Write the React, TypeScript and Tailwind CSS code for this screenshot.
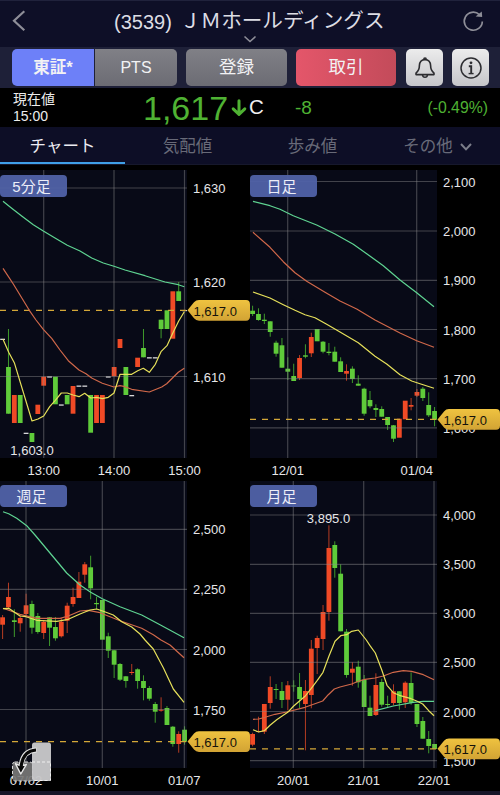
import type { ReactNode } from 'react'

type Side = 'up' | 'down' | 'flat'
// [slot, side, body top, body bottom, high, low]
type Candle = [number, Side, number, number, number?, number?]

interface ChartData {
  id: string
  label: string
  top: number
  height: number
  plotBottom: number
  hGrid: [number, string][]
  vGrid: [number, string][]
  price: number
  candles: Candle[]
  green: string
  orange: string
  yellow: string
  note?: { x: number; y: number; text: string }
}

const SLOT = 5.87
const FILL: Record<Side, string> = { up: '#f04a26', down: '#5fcb3a', flat: '#d8d8da' }
const WICK: Record<Side, string> = { up: '#b53c22', down: '#3f9a2c', flat: '#d8d8da' }

const charts: ChartData[] = [
  {
    id: 'm5',
    label: '5分足',
    top: 170,
    height: 311,
    plotBottom: 458,
    hGrid: [[188, '1,630'], [282, '1,620'], [376.5, '1,610']],
    vGrid: [[43.7, '13:00'], [114, '14:00'], [184.5, '15:00']],
    price: 310.3,
    candles: [
      [0, 'flat', 338.7, 340], [1, 'down', 367, 413.7, 329], [2, 'up', 395, 423], [3, 'down', 395, 423],
      [4, 'flat', 432.7, 434], [5, 'down', 433, 442], [6, 'up', 404.7, 414], [7, 'up', 376.7, 385.7],
      [8, 'flat', 376.3, 377.6], [9, 'down', 376.7, 404.3], [10, 'flat', 404.4, 405.7], [11, 'down', 395, 404.3],
      [12, 'up', 386, 413.7], [13, 'flat', 385.5, 386.8], [14, 'flat', 385.5, 386.8], [15, 'down', 395, 432.7],
      [16, 'up', 395, 423], [17, 'up', 395, 423], [18, 'flat', 376.3, 377.6], [19, 'up', 367, 376.3],
      [20, 'up', 339, 348], [21, 'down', 367, 395], [22, 'flat', 395, 396.3], [23, 'up', 357.7, 367],
      [24, 'down', 348, 357.3, 329], [25, 'flat', 357.2, 358.5], [26, 'flat', 357.2, 358.5],
      [27, 'down', 319.7, 329, 319.7, 338.3], [28, 'down', 310.3, 329], [29, 'up', 291.3, 338.7],
      [30, 'down', 291.3, 301, 282], [31, 'flat', 310, 311.2],
    ],
    green: '3,201.3 11.7,208.3 22,216.3 33.3,224.7 43.3,231 55,238 67.3,245.3 80,251 91.7,258 103.3,263 114,266.3 125,270 145,275.7 165,282 178.3,284.7 184.3,286.7',
    orange: '3,268.3 13.3,284 29.3,310.3 36,320 43.3,329.3 51.7,338.3 60,350 68.3,360.7 79,370 86,373.7 91.7,378 102.3,383.3 114,387 120,385.7 125,386.7 131.7,389.3 149.3,392 161.7,387 166.7,383.7 178.3,372.3 184.3,368.3',
    yellow: '3,339.3 8.7,352.3 14.3,362.7 32,421 38,419 43.7,416 49.7,406.7 55.3,400.3 61.3,393 67.3,393 73,395 79,396.7 84.7,393.3 90.7,398 96.7,397.3 102.3,398.7 108.3,397.3 114,393 120,374.3 131.7,374.3 137.7,370.7 143.3,368.3 149.3,372.3 155.3,364.3 161,351.7 167,345.7 172.7,333.3 178.7,321 184.3,311.7',
    note: { x: 32, y: 455, text: '1,603.0' },
  },
  {
    id: 'd1',
    label: '日足',
    top: 170,
    height: 311,
    plotBottom: 458,
    hGrid: [[181.5, '2,100'], [231, '2,000'], [280.3, '1,900'], [329.5, '1,800'], [378.7, '1,700'], [427.8, '1,600']],
    vGrid: [[37.7, '12/01'], [166.7, '01/04']],
    price: 419.4,
    candles: [
      [0, 'down', 310.7, 314, 305.7, 316], [1, 'down', 314, 320, 308.3, 320.7], [2, 'down', 319.7, 321, 313.7, 324],
      [3, 'down', 321.3, 332, 321.3, 336.7], [4, 'down', 342.7, 353.7, 340.7, 356.7], [5, 'down', 345.3, 367.7, 338],
      [6, 'down', 368.7, 371.7, 357.3, 380], [7, 'down', 376, 381, 363.7], [8, 'up', 358, 378, 355, 380],
      [9, 'down', 355.3, 356.7, 344.3, 358.3], [10, 'up', 337, 353.3, 332.7, 357], [11, 'down', 329, 341.3],
      [12, 'down', 341.7, 351.7, 341, 353.3], [13, 'down', 351.7, 353, 343, 355.3], [14, 'down', 351.7, 361.7, 346.7],
      [15, 'down', 361.3, 372, 357.3], [16, 'up', 371, 373.7, 364.3, 380.7], [17, 'down', 368.7, 379, 366.3, 383],
      [18, 'down', 383.7, 385.7, 375.3], [19, 'down', 388.7, 413.7, 387.7, 415.7], [20, 'down', 400, 406.3, 391, 408.3],
      [21, 'down', 408, 410, 404.3, 417], [22, 'down', 409, 416.7, 406.3], [23, 'down', 417, 425, 417, 430],
      [24, 'down', 425.3, 438.7, 425, 442], [25, 'up', 418.7, 437.7], [26, 'up', 400.7, 419.3],
      [27, 'up', 405, 406.7, 398, 410.3], [28, 'up', 392, 395.7, 389, 397], [29, 'down', 388.7, 398, 387, 401],
      [30, 'down', 405, 415.3, 392.3, 417], [31, 'down', 411, 419.7, 407, 426.3],
    ],
    green: '3,201.3 20,205.7 30,209.3 43.3,215.7 66.7,225 85,234 103.3,244.3 116.7,253.7 133.3,265.7 150,280 166.7,292.7 184,306.7',
    orange: '3,232.3 20,247.3 33.3,261.7 45,272.7 56.7,281.3 75,292.3 90,301 106.7,309 125,320 150,333 166.7,340.7 184,347.3',
    yellow: '3,292 20,298 33.3,304.7 45,310.3 55,314.7 65,317.7 76.7,324.3 88.3,331 108.3,342.7 125,356.3 136.7,364 150,374.7 161.7,381 170,383.7 184,388.3',
  },
  {
    id: 'w1',
    label: '週足',
    top: 481,
    height: 310,
    plotBottom: 768,
    hGrid: [[529.3, '2,500'], [589.3, '2,250'], [649.5, '2,000'], [709.5, '1,750']],
    vGrid: [[26, '07/02'], [102.3, '10/01'], [184.3, '01/07']],
    price: 741.6,
    candles: [
      [0, 'up', 617.3, 624.7, 615, 639], [1, 'up', 597, 607.3, 582.7, 608.7], [2, 'down', 620.3, 622, 609.3, 637],
      [3, 'up', 618, 623.3, 615, 631.7], [4, 'up', 605.3, 614, 593.7, 617.3], [5, 'down', 604, 627.7, 600.7, 633.7],
      [6, 'down', 616, 632, 613, 633.7], [7, 'up', 622, 633, 620, 639], [8, 'down', 617.3, 627.7, 617, 646],
      [9, 'down', 627, 638.3, 617, 640.7], [10, 'up', 621.7, 636.3, 618, 637.5], [11, 'up', 605.7, 620.7, 602.7, 633],
      [12, 'up', 597, 604, 587.7, 606.7], [13, 'up', 581.7, 598, 572], [14, 'up', 564.3, 574.7, 562, 582.7],
      [15, 'down', 567.3, 588.3, 555.7, 599.3], [16, 'down', 603, 604.2, 596.7, 609], [17, 'down', 600, 639.7],
      [18, 'down', 636.3, 650.7, 632.7, 658], [19, 'down', 650.3, 664.7, 650, 678], [20, 'down', 664, 679.7, 663, 681],
      [21, 'down', 676.3, 681, 676, 687.7], [22, 'up', 672, 673, 664, 675], [23, 'down', 669.3, 681, 668.3, 688.7],
      [24, 'down', 681, 688, 675.3, 700.3], [25, 'down', 688, 698.7, 686, 700.7], [26, 'down', 704, 711.7, 702, 722.7],
      [27, 'up', 709.7, 710.7, 697.3, 711.7], [28, 'down', 708, 725, 706], [29, 'down', 726.7, 744, 726, 746.7],
      [30, 'up', 734, 744, 731.3, 752.7], [31, 'down', 729.7, 741.7, 726.3, 744.7],
    ],
    green: '3,511.7 8.7,513.7 16.7,518.3 26.7,525.7 35,535 50,553 66.7,573 80,585 90.7,592.3 102.3,598.7 120,606.7 141.7,615 160,624.7 184,637.7',
    orange: '3,608.3 8.7,610.3 20,614.3 36.7,618.3 60,618.3 68.3,616 80,611 88.3,610.3 100,612.7 120,620.7 141.7,628.3 153.3,634.7 161,640 170,645 184,657.7',
    yellow: '3,608.7 8.7,608.3 20,616 26,616.7 36.7,620.3 56.7,621.3 68.3,619.3 80,614 90,610 96.7,609 103.3,611.3 113.3,615 121.7,621.7 131.7,627 140,634 145,640 153.3,649 163.3,667.7 173.3,689 184,702.3',
  },
  {
    id: 'mo1',
    label: '月足',
    top: 481,
    height: 310,
    plotBottom: 768,
    hGrid: [[515, '4,000'], [564.3, '3,500'], [613.3, '3,000'], [662.3, '2,500'], [711.5, '2,000'], [760.7, '1,500']],
    vGrid: [[43.3, '20/01'], [113.7, '21/01'], [184, '22/01']],
    price: 748.8,
    candles: [
      [0, 'up', 734, 744.7, 732.7, 746.3], [1, 'up', 731, 732, 716.7, 732.3], [2, 'up', 704, 731.7, 704, 734],
      [3, 'up', 687, 703, 676.3, 708.7], [4, 'down', 689, 690, 684, 699], [5, 'down', 691, 700, 682, 708],
      [6, 'up', 685.3, 699.7, 681, 710.3], [7, 'down', 685.7, 686.3, 680.3, 691.7], [8, 'down', 687, 699, 673, 708],
      [9, 'up', 691, 704, 680, 750.3], [10, 'up', 648.7, 695, 640, 708.3], [11, 'up', 638, 648, 635.7, 674],
      [12, 'up', 612, 639, 605, 650], [13, 'up', 548, 612, 525.3, 620.7], [14, 'down', 545, 568, 541.3, 577.7],
      [15, 'down', 573.7, 631.3, 564.3], [16, 'down', 631.7, 675, 629, 677.7], [17, 'up', 668.7, 672.7, 662.3, 685.7],
      [18, 'down', 666.7, 682.3, 660.7, 687.7], [19, 'down', 679.7, 707, 675], [20, 'down', 707.7, 716, 695.7],
      [21, 'up', 685, 715, 673.3, 716], [22, 'down', 682, 704.7, 678.7, 706.7], [23, 'down', 704, 705, 695.7, 707.3],
      [24, 'up', 691.3, 703, 684.3, 705.3], [25, 'down', 691.3, 703, 691, 709.7], [26, 'up', 682.7, 702.3, 681.3, 708],
      [27, 'down', 683, 702.7, 672.3, 704.7], [28, 'down', 704, 724, 704, 727], [29, 'down', 721, 738.7, 717],
      [30, 'down', 739, 746, 731, 753.3], [31, 'down', 744, 749],
    ],
    green: '125.3,710.7 143.3,706 163.3,702.3 173.3,701.3 184,701.3',
    orange: '3,719.3 8.7,719 15,717.3 25,714.3 36.7,712 55,707.3 72.7,701 78.3,694.7 84.3,689 90,687 101.7,684 108.3,681.3 115,679.3 125,678 133.3,676 143.3,672.3 153.3,670.7 161.7,671.3 173.3,674.7 184,679.7',
    yellow: '3,729.7 8.7,732 14.3,730.7 20,725.3 26.7,719.7 37.7,712.3 43.7,706 55.3,696 61.3,688.3 67.3,680.3 73,672.3 79,656 85,641.3 90.7,635.7 96.7,634.7 101.7,631.3 108.3,630 116.3,640 120,645.7 125.3,653 131.7,669.7 137,685.3 143.3,692.7 149.3,695.3 161,698.7 166.7,701 172.7,704 178.7,710.7 184,715.7',
    note: { x: 78.5, y: 523, text: '3,895.0' },
  },
]

function CandleMark({ candle }: { candle: Candle }) {
  const [slot, side, top, bottom, high = top, low = bottom] = candle
  const x = 2.6 + slot * SLOT
  return (
    <g>
      {low - high > bottom - top && <rect x={x - 0.5} y={high} width={1} height={low - high} fill={WICK[side]} />}
      <rect x={x - 2.4} y={top} width={4.8} height={bottom - top} fill={FILL[side]} />
    </g>
  )
}

function Chart({ data }: { data: ChartData }) {
  const { top, height, plotBottom, price } = data
  return (
    <section className="relative">
      <svg
        width="250"
        height={height}
        viewBox={`0 ${top} 250 ${height}`}
        className="block font-['Liberation_Sans',sans-serif] text-[13px]"
      >
        <defs>
          <linearGradient id={`tag-${data.id}`} x1="0" y1="0" x2="0" y2="1">
            <stop offset="0" stopColor="#efc340" />
            <stop offset="1" stopColor="#d2a334" />
          </linearGradient>
          <clipPath id={`plot-${data.id}`}>
            <rect x="0" y={top} width="187" height={plotBottom - top} />
          </clipPath>
        </defs>
        <rect x="0" y={top} width="187" height={plotBottom - top} fill="#080a17" />
        <g clipPath={`url(#plot-${data.id})`}>
          {data.candles.map((c) => (
            <CandleMark key={c[0]} candle={c} />
          ))}
          <g stroke="#8a8a8c" strokeOpacity="0.45" strokeWidth="1.2">
            {data.hGrid.map(([y]) => (
              <line key={y} x1="0" x2="187" y1={y} y2={y} />
            ))}
            {data.vGrid.map(([x]) => (
              <line key={x} x1={x} x2={x} y1={top} y2={plotBottom} />
            ))}
          </g>
          <line x1="0" x2="187" y1={price} y2={price} stroke="#d4a838" strokeWidth="1.2" strokeDasharray="6 6" />
          <g fill="none" strokeWidth="1.2" strokeLinejoin="round">
            <polyline points={data.green} stroke="#5fd492" />
            <polyline points={data.orange} stroke="#d0684a" />
            <polyline points={data.yellow} stroke="#e6e05a" />
          </g>
        </g>
        <g fill="#e6e6e8">
          {data.hGrid.map(([y, text]) => (
            <text key={text} x="193" y={y + 5}>
              {text}
            </text>
          ))}
          {data.vGrid.map(([x, text]) => (
            <text key={text} x={x} y={plotBottom + 16.5} textAnchor="middle">
              {text}
            </text>
          ))}
          {data.note && (
            <text x={data.note.x} y={data.note.y} textAnchor="middle">
              {data.note.text}
            </text>
          )}
        </g>
        <path
          d={`M187.5 ${price} L194 ${price - 8} Q196 ${price - 10.4} 199 ${price - 10.4} H246 Q250 ${price - 10.4} 250 ${price - 6} V${price + 6} Q250 ${price + 10.4} 246 ${price + 10.4} H199 Q196 ${price + 10.4} 194 ${price + 8} Z`}
          fill={`url(#tag-${data.id})`}
        />
        <text x="193.5" y={price + 5.2} fill="#15120a">
          1,617.0
        </text>
      </svg>
      <span
        className={`absolute left-0 flex h-[22px] w-[67px] items-center justify-center rounded-[4px] bg-[#5062a8]/95 pr-1 text-[15px] leading-none text-[#eceef8] ${top === 170 ? 'top-[5px]' : 'top-[4px]'}`}
      >
        {data.label}
      </span>
    </section>
  )
}

function IconButton({ children }: { children: ReactNode }) {
  return (
    <button className="flex h-[37px] w-[37px] items-center justify-center rounded-[5px] bg-linear-to-b from-[#ececec] to-[#c6c6ca]">
      {children}
    </button>
  )
}

function Header() {
  return (
    <header className="relative flex h-[47px] items-start border-t border-[#20223c] bg-[#0e0f27]">
      <svg width="14" height="22" viewBox="0 0 14 22" className="mt-[9px] ml-[12px]" fill="none" stroke="#8e8e98" strokeWidth="2.2">
        <path d="M12.3 1.2 L2 10.7 L12.3 20.2" />
      </svg>
      <h1 className="ml-[88px] flex h-[41px] items-center text-[20px] whitespace-pre text-[#dddde4]">
        <span className="w-[66px]">(3539)</span>
        <span className="text-[20.6px]">ＪＭホールディングス</span>
      </h1>
      <svg width="14" height="8" viewBox="0 0 14 8" className="absolute top-[34px] left-[243px]" fill="none" stroke="#8e8e98" strokeWidth="1.6">
        <path d="M1.5 1.5 L7 6.5 L12.5 1.5" />
      </svg>
      <svg width="22" height="22" viewBox="0 0 22 22" className="absolute top-[9px] left-[462px]" fill="none" stroke="#8e8e98" strokeWidth="1.7">
        <path d="M17.4 4.6 A9 9 0 1 0 20.3 11.4" />
        <path d="M13.6 6.6 L20.2 7 L19.8 1.4 Z" fill="#8e8e98" stroke="none" />
      </svg>
    </header>
  )
}

function ActionBar() {
  return (
    <div className="flex h-[41px] items-start bg-[#1e2038] pt-[2px] pl-[12px] text-[17.5px] text-[#f2f2f4]">
      <button className="h-[37px] w-[82px] rounded-l-[5px] bg-[#6d80f8] text-[16.5px] font-bold">東証*</button>
      <button className="ml-px h-[37px] w-[82px] rounded-r-[5px] bg-linear-to-b from-[#808086] to-[#6c6c74] text-[16px]">
        PTS
      </button>
      <button className="ml-[9px] h-[37px] w-[101px] rounded-[5px] bg-linear-to-b from-[#808086] to-[#6c6c74]">登録</button>
      <button className="ml-[9px] h-[37px] w-[100px] rounded-[5px] bg-linear-to-r from-[#e4566a] to-[#c34b5a]">取引</button>
      <div className="ml-[10px] flex gap-[9px]">
        <IconButton>
          <svg width="22" height="24" viewBox="0 0 22 24" fill="none" stroke="#2c2c30" strokeWidth="1.6" strokeLinejoin="round">
            <path d="M11 3.6 C7.4 3.6 5.4 6.2 5.4 9.6 C5.4 13.6 4.2 15.4 2 17.2 V18.6 H20 V17.2 C17.8 15.4 16.6 13.6 16.6 9.6 C16.6 6.2 14.6 3.6 11 3.6 Z" />
            <path d="M9.8 3.6 C9.8 1.4 12.2 1.4 12.2 3.6" />
            <path d="M8.6 19 C8.8 22 13.2 22 13.4 19" />
          </svg>
        </IconButton>
        <IconButton>
          <svg width="22" height="22" viewBox="0 0 22 22" fill="none" stroke="#2c2c30" strokeWidth="1.5">
            <circle cx="11" cy="11" r="10" />
            <circle cx="11" cy="5.8" r="1.4" fill="#2c2c30" stroke="none" />
            <path d="M8.8 9.2 H11.2 V16.4" strokeWidth="1.9" />
            <path d="M8.6 16.6 H13.6" strokeWidth="1.4" />
          </svg>
        </IconButton>
      </div>
    </div>
  )
}

function Quote() {
  return (
    <div className="flex h-[39px] items-center bg-black pl-[13px] text-[#4fb233]">
      <div className="w-[130px] text-[14px] leading-[17px] text-[#ececec]">
        <p>現在値</p>
        <p>15:00</p>
      </div>
      <p className="w-[88px] text-[34px] leading-none">1,617</p>
      <svg width="16" height="18" viewBox="0 0 16 18" fill="none" stroke="#4fb233" strokeWidth="3" strokeLinecap="round" strokeLinejoin="round">
        <path d="M8 1.8 V15 M2.2 9.8 L8 15.4 L13.8 9.8" />
      </svg>
      <p className="ml-[2px] w-[46px] text-[20.5px] leading-none text-[#f0f0f0]">C</p>
      <p className="text-[19px] leading-none">-8</p>
      <p className="mr-[12px] ml-auto text-[15.8px] leading-none">(-0.49%)</p>
    </div>
  )
}

function Tabs() {
  return (
    <nav className="flex h-[38px] border-b border-[#16182c] bg-[#0d0e26] text-[16.5px] text-[#686a78]">
      <span className="flex w-1/4 items-center justify-center border-b-2 border-[#3f9fe6] pt-[4px] text-[#ececf2]">
        チャート
      </span>
      <span className="flex w-1/4 items-center justify-center pt-[2px]">気配値</span>
      <span className="flex w-1/4 items-center justify-center pt-[2px]">歩み値</span>
      <span className="flex w-1/4 items-center justify-center gap-[7px] pt-[2px]">
        その他
        <svg width="12" height="8" viewBox="0 0 12 8" fill="none" stroke="#7c7e8a" strokeWidth="2">
          <path d="M1 1 L6 6.4 L11 1" />
        </svg>
      </span>
    </nav>
  )
}

function RotateHint() {
  return (
    <svg width="40" height="40" viewBox="0 0 40 40" className="absolute bottom-[13px] left-[12px]">
      <rect x="0.5" y="20" width="20" height="19" rx="2.5" fill="#777" fillOpacity="0.92" stroke="#ddd" strokeDasharray="3 2" />
      <rect x="20" y="0.5" width="19" height="38.5" rx="2.5" fill="#c6c6c8" fillOpacity="0.97" />
      <path d="M20 20 H38.5 V38.5 H20" fill="none" stroke="#eee" strokeDasharray="3 2" />
      <g fill="none" stroke="#e6e6e6" strokeWidth="5">
        <path d="M24.5 8 C15 8.5 10 14 9.2 24" />
      </g>
      <path
        d="M3.4 21.6 L9 24 L14.4 22.4 L8.8 32 Z"
        fill="#080808"
        stroke="#e6e6e6"
        strokeWidth="1.4"
        strokeLinejoin="round"
      />
      <path d="M24 8 C15 8.5 10 14 9 26" fill="none" stroke="#080808" strokeWidth="3.2" />
    </svg>
  )
}

export default function App() {
  return (
    <div className="relative h-[795px] w-[500px] overflow-hidden bg-black font-['Liberation_Sans','Noto_Sans_CJK_JP',sans-serif]">
      <Header />
      <ActionBar />
      <Quote />
      <Tabs />
      <main className="grid grid-cols-2 pt-[5px]">
        {charts.map((c) => (
          <Chart key={c.id} data={c} />
        ))}
      </main>
      <div className="h-[4px] bg-[#171628]" />
      <RotateHint />
    </div>
  )
}
